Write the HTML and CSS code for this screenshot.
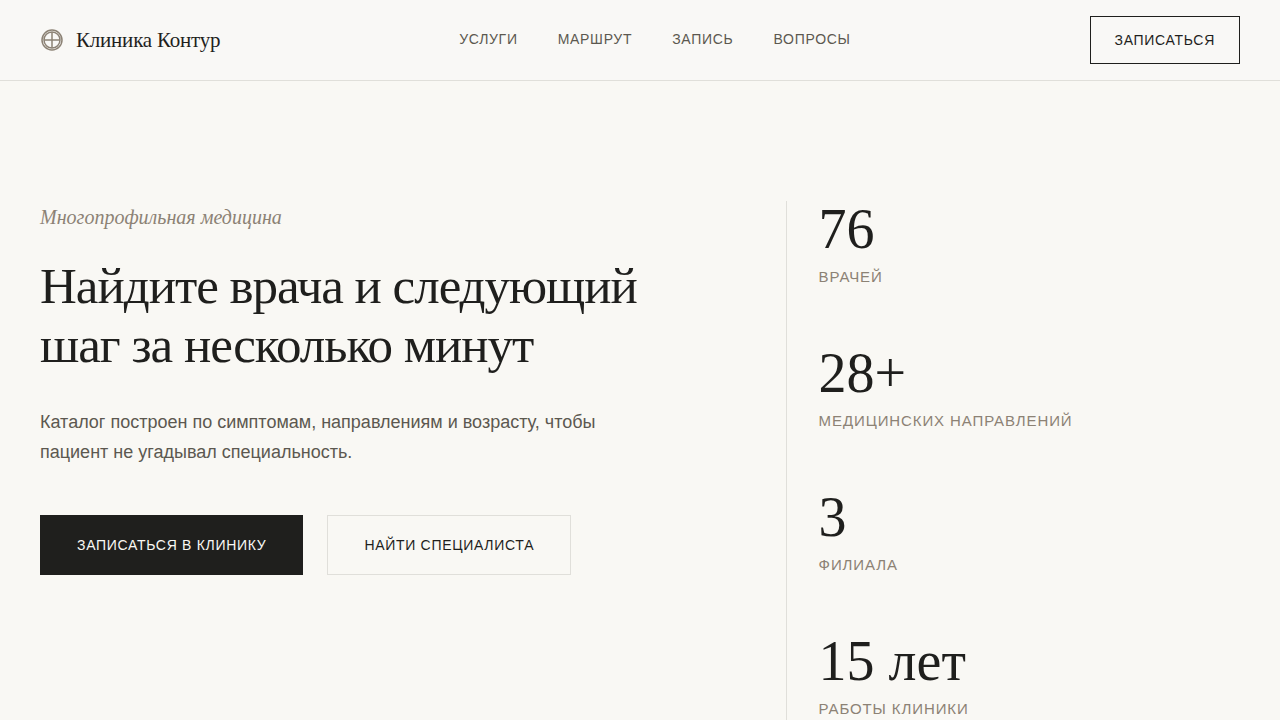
FILE: index.html
```html
<!DOCTYPE html>
<html lang="ru">
<head>
    <meta charset="UTF-8">
    <meta name="viewport" content="width=device-width, initial-scale=1.0">
    <title>Клиника Контур</title>
    <link rel="stylesheet" href="styles.css">
</head>
<body>
    <header class="header">
        <a class="logo" href="#">
            <svg class="logo-icon" viewBox="0 0 24 24" fill="none" stroke="currentColor" aria-hidden="true">
                <circle cx="12" cy="12" r="10" stroke-width="1.5"/>
                <circle cx="12" cy="12" r="8" stroke-width="1.5"/>
                <path d="M12 4v16M4 12h16" stroke-width="1.5"/>
            </svg>
            <span>Клиника Контур</span>
        </a>
        <nav class="nav">
            <a href="#services">Услуги</a>
            <a href="#route">Маршрут</a>
            <a href="#booking">Запись</a>
            <a href="#faq">Вопросы</a>
        </nav>
        <button class="btn btn-small" type="button">Записаться</button>
    </header>

    <main class="hero">
        <section class="hero-content">
            <p class="eyebrow">Многопрофильная медицина</p>
            <h1>Найдите врача и следующий шаг за несколько минут</h1>
            <p class="lead">Каталог построен по симптомам, направлениям и возрасту, чтобы пациент не угадывал специальность.</p>
            <div class="actions">
                <button class="btn btn-primary" type="button">Записаться в клинику</button>
                <button class="btn btn-secondary" type="button">Найти специалиста</button>
            </div>
        </section>
        <dl class="stats">
            <div class="stat">
                <dt>врачей</dt>
                <dd>76</dd>
            </div>
            <div class="stat">
                <dt>медицинских направлений</dt>
                <dd>28+</dd>
            </div>
            <div class="stat">
                <dt>филиала</dt>
                <dd>3</dd>
            </div>
            <div class="stat">
                <dt>работы клиники</dt>
                <dd>15 лет</dd>
            </div>
        </dl>
    </main>
</body>
</html>
```
FILE: styles.css
```css
* {
    box-sizing: border-box;
    margin: 0;
    padding: 0;
}
body {
    font-family: "Liberation Sans", Arial, sans-serif;
    color: #1f1f1d;
    background: #f9f8f4;
}
a {
    color: inherit;
    text-decoration: none;
}
.header {
    display: flex;
    align-items: center;
    justify-content: space-between;
    padding: 16px 40px;
    background: #f9f8f6;
    border-bottom: 1px solid #e0dfda;
}
.logo {
    display: flex;
    align-items: center;
    gap: 12px;
    font-family: "Liberation Serif", "Times New Roman", serif;
    font-size: 21px;
    letter-spacing: -0.01em;
}
.logo-icon {
    width: 24px;
    height: 24px;
    color: #8c8275;
}
.nav {
    display: flex;
    gap: 40px;
    font-size: 14px;
    line-height: 22px;
    letter-spacing: 0.05em;
    text-transform: uppercase;
    color: #5c5850;
}
.nav a {
    padding-bottom: 2px;
}
.btn {
    font-family: inherit;
    font-size: 14px;
    line-height: 22px;
    letter-spacing: 0.05em;
    text-transform: uppercase;
    color: #1f1f1d;
    background: transparent;
    border: 1px solid #1f1f1d;
    cursor: pointer;
}
.btn-small {
    padding: 12px 24px;
}
.btn-primary,
.btn-secondary {
    padding: 18px 36px;
}
.btn-primary {
    color: #f9f8f4;
    background: #1f1f1d;
}
.btn-secondary {
    border-color: #e0dfda;
}
.hero {
    display: grid;
    grid-template-columns: 3fr 2fr;
    gap: 64px;
    padding: 120px 40px;
}
.eyebrow {
    margin-bottom: 24px;
    font-family: "Liberation Serif", "Times New Roman", serif;
    font-size: 20px;
    font-style: italic;
    line-height: 32px;
    color: #8c8275;
}
h1 {
    margin-bottom: 32px;
    font-family: "Liberation Serif", "Times New Roman", serif;
    font-size: 51px;
    font-weight: 400;
    line-height: 59px;
    letter-spacing: -0.02em;
}
.lead {
    max-width: 580px;
    margin-bottom: 48px;
    font-size: 18px;
    line-height: 30px;
    color: #5c5850;
}
.actions {
    display: flex;
    flex-wrap: wrap;
    gap: 24px;
}
.stats {
    display: flex;
    flex-direction: column;
    gap: 56px;
    padding-left: 32px;
    border-left: 1px solid #e0dfda;
}
.stat {
    display: flex;
    flex-direction: column-reverse;
    gap: 8px;
}
.stat dd {
    font-family: "Liberation Serif", "Times New Roman", serif;
    font-size: 56px;
    line-height: 56px;
}
.stat dt {
    font-size: 15px;
    line-height: 24px;
    letter-spacing: 0.06em;
    text-transform: uppercase;
    color: #8c8275;
}
```
